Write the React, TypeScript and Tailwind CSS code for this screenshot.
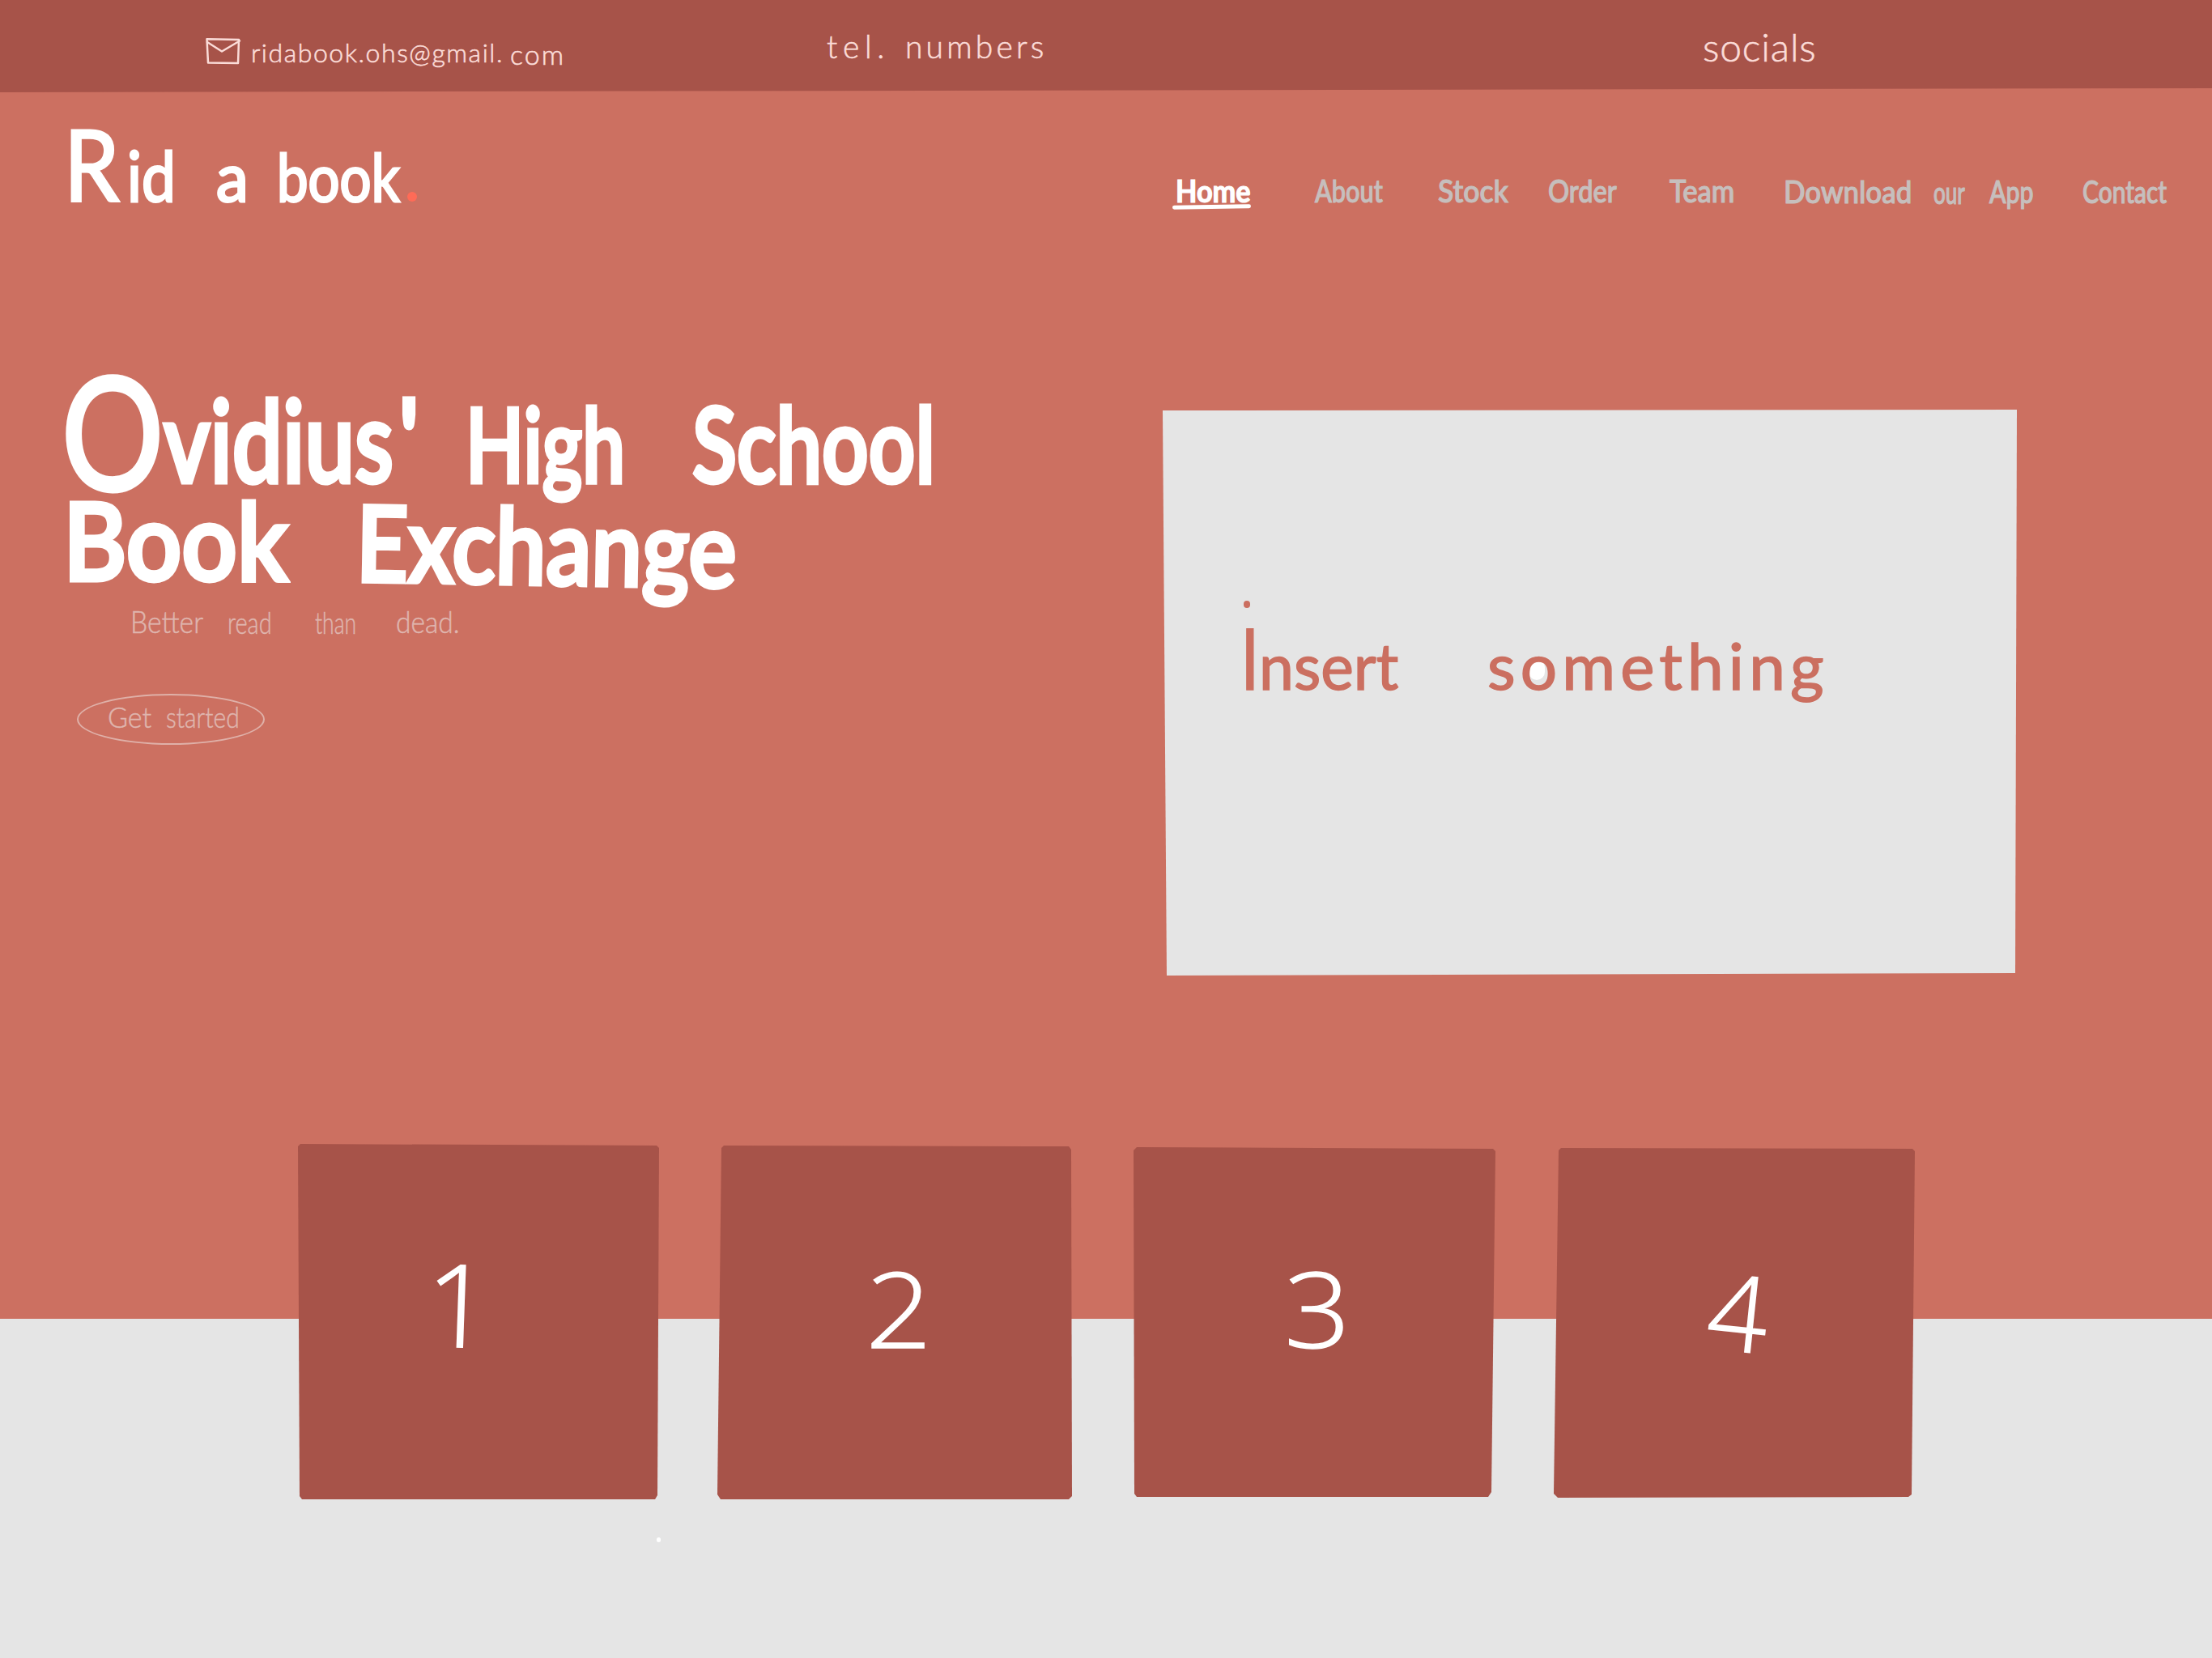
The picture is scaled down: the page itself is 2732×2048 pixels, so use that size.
import { useLayoutEffect, useRef, useState } from 'react';

type WordProps = {
  children: string;
  /** Size, width, weight and spacing classes. */
  className: string;
};

/** A word that fills its box: letters are spaced out, or condensed when too wide. */
function Word({ children, className }: WordProps) {
  const box = useRef<HTMLSpanElement>(null);
  const ink = useRef<HTMLSpanElement>(null);
  const [fit, setFit] = useState({ spacing: 0, scale: 1 });

  useLayoutEffect(() => {
    if (!box.current || !ink.current) return;
    const room = box.current.offsetWidth;
    const natural = ink.current.offsetWidth;
    if (natural > room) {
      setFit({ spacing: 0, scale: room / natural });
    } else if (children.length > 1) {
      setFit({ spacing: (room - natural) / (children.length - 1), scale: 1 });
    }
  }, [children]);

  return (
    <span ref={box} className={`block flex-none whitespace-nowrap leading-none ${className}`}>
      <span
        ref={ink}
        className="inline-block origin-left [stroke-linejoin:round]"
        style={{ letterSpacing: fit.spacing, transform: `scaleX(${fit.scale})` }}
      >
        {children}
      </span>
    </span>
  );
}

function MailIcon() {
  return (
    <svg
      viewBox="0 0 44 34"
      className="mt-[46px] h-[34px] w-[44px] flex-none"
      fill="none"
      stroke="#fbdcd8"
      strokeWidth="2.5"
      strokeLinecap="round"
      strokeLinejoin="round"
    >
      <path d="M1.500 2.200 41 3 40 32 3 31.500Z" />
      <path d="M2 6 20 17.500 42 4.500" />
    </svg>
  );
}

function TopBar() {
  return (
    <header className="flex h-[114px] items-start bg-[#a75349] pl-[254px] font-light text-[#fbdcd8] [-webkit-text-stroke:0.6px_#fbdcd8] [clip-path:polygon(0_0,100%_0,100%_109px,0_114px)]">
      <MailIcon />
      <Word className="ml-[12px] mt-[49px] w-[310px] text-[32px]">ridabook.ohs@gmail.</Word>
      <Word className="ml-[10px] mt-[50px] w-[66px] text-[34px]">com</Word>
      <Word className="ml-[325px] mt-[38px] w-[71px] text-[39px]">tel.</Word>
      <Word className="ml-[26px] mt-[38px] w-[171px] text-[39px]">numbers</Word>
      <Word className="ml-[814px] mt-[34px] w-[140px] text-[48px]">socials</Word>
    </header>
  );
}

function NavBar() {
  return (
    <div className="mt-[27px] flex h-[122px] items-baseline pl-[79px] text-white">
      <Word className="w-[68px] text-[122px] [-webkit-text-stroke:3px_white]">R</Word>
      <Word className="ml-[10px] w-[60px] text-[86px] [-webkit-text-stroke:3px_white]">id</Word>
      <Word className="ml-[50px] w-[40px] text-[84px] [-webkit-text-stroke:3px_white]">a</Word>
      <Word className="ml-[35px] w-[152px] text-[82px] [-webkit-text-stroke:3px_white]">book</Word>
      <span className="ml-[9px] h-[12px] w-[12px] flex-none rounded-full bg-[#ff6b57]" />
      <nav className="ml-[935px] flex translate-y-[1px] items-baseline text-[38px] font-medium text-[#c6bfbd] [-webkit-text-stroke:1.2px]">
        <div className="relative text-white">
          <Word className="ml-[2px] w-[93px] font-bold">Home</Word>
          <span className="absolute -left-[2px] top-[37px] h-[5px] w-[97px] -rotate-1 rounded-full bg-white" />
        </div>
        <Word className="ml-[79px] w-[84px]">About</Word>
        <Word className="ml-[68px] w-[87px]">Stock</Word>
        <Word className="ml-[49px] w-[85px]">Order</Word>
        <Word className="ml-[65px] w-[80px]">Team</Word>
        <Word className="ml-[61px] w-[158px] translate-y-[1px]">Download</Word>
        <Word className="ml-[27px] w-[39px] translate-y-[2px]">our</Word>
        <Word className="ml-[30px] w-[55px] translate-y-[1px]">App</Word>
        <Word className="ml-[60px] w-[104px] translate-y-[1px]">Contact</Word>
      </nav>
    </div>
  );
}

function Intro() {
  return (
    <div className="w-[1436px] flex-none pt-[171px]">
      <h1 className="font-semibold text-white [-webkit-text-stroke:5px_white]">
        <div className="flex h-[197px] items-baseline pl-[76px]">
          <Word className="w-[126px] text-[194px] font-normal">O</Word>
          <Word className="w-[284px] -translate-y-[10px] text-[140px]">vidius</Word>
          <Word className="ml-[6px] w-[26px] -translate-y-[13px] text-[140px]">'</Word>
          <Word className="ml-[57px] w-[197px] -translate-y-[10px] text-[128px]">High</Word>
          <Word className="ml-[83px] w-[300px] -translate-y-[10px] text-[130px]">School</Word>
        </div>
        <div className="-mt-[31px] flex h-[130px] items-baseline pl-[78px]">
          <Word className="w-[278px] text-[132px]">Book</Word>
          <Word className="ml-[84px] w-[470px] translate-y-[5px] rotate-1 text-[130px]">Exchange</Word>
        </div>
      </h1>
      <p className="mt-[19px] flex items-baseline pl-[161px] text-[37px] font-light text-[#dfb5ae] [-webkit-text-stroke:0.5px]">
        <Word className="w-[90px]">Better</Word>
        <Word className="ml-[30px] w-[55px] translate-y-[1px]">read</Word>
        <Word className="ml-[53px] w-[51px] translate-y-[1px]">than</Word>
        <Word className="ml-[49px] w-[79px]">dead.</Word>
      </p>
      <button className="ml-[95px] mt-[71px] flex h-[63px] w-[232px] items-start rounded-[50%] border-2 border-[#dfb0a8] pl-[36px] pt-[8px] text-[36px] font-light text-[#dfb5ae] [-webkit-text-stroke:0.5px]">
        <Word className="w-[54px]">Get</Word>
        <Word className="ml-[18px] w-[91px]">started</Word>
      </button>
    </div>
  );
}

function Placeholder() {
  return (
    <div className="relative mt-[243px] h-[699px] w-[1055px] flex-none bg-[#e5e5e5] pl-[97px] pt-[254px] text-[#cb6f60] [clip-path:polygon(0_1px,100%_0,1053px_696px,5px_699px)]">
      <span className="absolute left-[100px] top-[236px] h-[9px] w-[8px] rounded-full bg-[#cb6f60]" />
      <span className="absolute left-[452px] top-[308px] h-[26px] w-[20px] rounded-full bg-white" />
      <div className="relative flex items-baseline [-webkit-text-stroke:1.5px_#cb6f60]">
        <Word className="w-[22px] text-[104px] font-medium">I</Word>
        <Word className="w-[172px] text-[80px]">nsert</Word>
        <Word className="ml-[110px] w-[416px] text-[80px]">something</Word>
      </div>
    </div>
  );
}

function Cards() {
  const base =
    "flex-none bg-[#a75349] pt-[130px] text-center font-['Open_Sans',sans-serif] text-[130px] leading-[1.1] font-light text-white [-webkit-text-stroke:1.5px_white]";
  return (
    <div className="flex items-start pl-[368px]">
      <div className={`${base} h-[439px] w-[446px] pr-[48px] [clip-path:polygon(0_3px,3px_0,443px_2px,446px_5px,444px_434px,441px_439px,5px_439px,2px_435px)]`}>
        <span className="inline-block -translate-y-[5px] rotate-2 text-[142px] leading-none">1</span>
      </div>
      <div className={`${base} ml-[72px] h-[439px] w-[438px] pl-[10px] [clip-path:polygon(5px_5px,8px_2px,434px_3px,437px_7px,438px_435px,434px_439px,4px_439px,0_433px)]`}>
        <span className="inline-block scale-x-110">2</span>
      </div>
      <div className={`${base} ml-[76px] h-[439px] w-[447px] pl-[8px] [clip-path:polygon(0_8px,4px_4px,444px_6px,447px_9px,442px_430px,438px_436px,4px_436px,1px_432px)]`}>
        <span className="inline-block scale-x-110">3</span>
      </div>
      <div className={`${base} ml-[72px] h-[439px] w-[446px] pl-[10px] [clip-path:polygon(6px_8px,9px_5px,443px_6px,446px_9px,442px_433px,438px_436px,5px_437px,0_432px)]`}>
        <span className="inline-block translate-y-[4px] rotate-6">4</span>
      </div>
    </div>
  );
}

export default function App() {
  return (
    <div className="relative h-[2048px] w-[2732px] overflow-hidden bg-[#e5e5e5] font-['Lato',sans-serif]">
      <div className="h-[1629px] bg-[#cc7061]">
        <TopBar />
        <NavBar />
        <section className="flex h-[1150px] items-start">
          <Intro />
          <Placeholder />
        </section>
        <Cards />
      </div>
      <span className="absolute left-[811px] top-[1899px] h-[6px] w-[5px] rounded-full bg-white" />
    </div>
  );
}
